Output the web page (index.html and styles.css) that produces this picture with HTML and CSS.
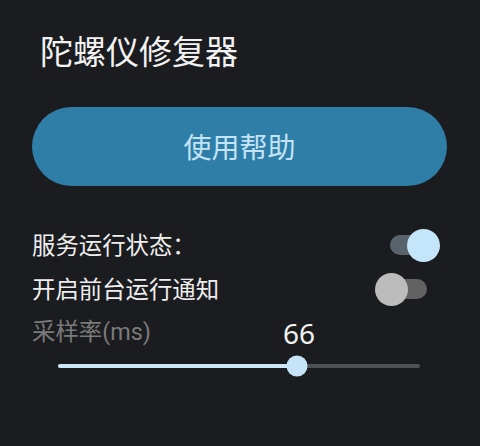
FILE: index.html
```html
<!DOCTYPE html>
<html lang="zh-CN">
<head>
<meta charset="utf-8">
<title>陀螺仪修复器</title>
<link rel="stylesheet" href="styles.css">
</head>
<body>
<main class="app">
  <h1 class="title">陀螺仪修复器</h1>
  <button class="help-btn" type="button">使用帮助</button>
  <section class="settings">
    <div class="row">
      <span class="row-label">服务运行状态：</span>
      <span class="switch on"><span class="track"></span><span class="thumb"></span></span>
    </div>
    <div class="row">
      <span class="row-label">开启前台运行通知</span>
      <span class="switch off"><span class="track"></span><span class="thumb"></span></span>
    </div>
  </section>
  <section class="slider-block">
    <div class="slider-head">
      <span class="slider-label">采样率(ms)</span>
      <span class="slider-value" style="left: calc(28px + 0.66 * (100% - 53px))">66</span>
    </div>
    <div class="slider">
      <div class="rail">
        <div class="rail-active" style="width: 66%"></div>
        <div class="rail-thumb" style="left: 66%"></div>
      </div>
    </div>
  </section>
</main>
</body>
</html>
```
FILE: styles.css
```css
html, body {
  margin: 0;
  padding: 0;
  background: #1b1c1f;
}

body {
  width: 480px;
  height: 446px;
  overflow: hidden;
  font-family: Roboto, "Noto Sans CJK SC", sans-serif;
  color: #ececec;
}

.app {
  display: flex;
  flex-direction: column;
  padding: 30px 33px 0 32px;
}

.title {
  margin: 0 0 0 8px;
  font-family: "Noto Sans CJK SC", sans-serif;
  font-weight: 400;
  font-size: 33px;
  line-height: 40px;
  color: #f2f2f2;
}

.help-btn {
  margin-top: 37px;
  height: 79px;
  width: 100%;
  border: none;
  border-radius: 40px;
  background: #2f7ea8;
  color: #c4e4f6;
  font-family: "Noto Sans CJK SC", sans-serif;
  font-size: 28px;
  line-height: 1;
  padding: 0 0 2px 0;
}

.settings {
  margin-top: 37px;
  display: flex;
  flex-direction: column;
  padding-right: 6px;
}

.row {
  height: 44px;
  display: flex;
  align-items: center;
  justify-content: space-between;
}

.row-label {
  font-family: "Noto Sans CJK SC", sans-serif;
  font-size: 23.4px;
  line-height: 1;
  color: #eeeeee;
}

.switch {
  position: relative;
  width: 66px;
  height: 34px;
  display: flex;
  align-items: center;
  justify-content: center;
}

.switch .track {
  width: 37px;
  height: 20px;
  border-radius: 10px;
}

.switch .thumb {
  position: absolute;
  top: 0.5px;
  width: 33px;
  height: 33px;
  border-radius: 50%;
  filter: blur(0.6px);
}

.switch.on .track { background: #58636b; }
.switch.on .thumb { left: 32px; background: #c5e5fa; }

.switch.off .track { background: #626262; }
.switch.off .thumb { left: 0; background: #bcbcbc; }

.slider-block {
  display: flex;
  flex-direction: column;
}

.slider-head {
  position: relative;
  height: 44px;
  display: flex;
  align-items: center;
}

.slider-label {
  font-size: 23.4px;
  line-height: 1;
  color: #7a7a7a;
}

.slider-value {
  position: absolute;
  top: 50%;
  transform: translate(-50%, -50%);
  font-family: "Noto Sans", sans-serif;
  font-size: 28px;
  line-height: 1;
  color: #f2f2f2;
}

.slider {
  height: 22px;
  display: flex;
  align-items: center;
  padding: 0 27px 0 26px;
}

.rail {
  position: relative;
  flex: 1;
  height: 4px;
  border-radius: 2px;
  background: #4f5255;
}

.rail-active {
  height: 100%;
  border-radius: 2px;
  background: #cde8f9;
}

.rail-thumb {
  position: absolute;
  top: 50%;
  width: 21px;
  height: 21px;
  border-radius: 50%;
  background: #c6e4f8;
  transform: translate(-50%, -50%);
}
```
